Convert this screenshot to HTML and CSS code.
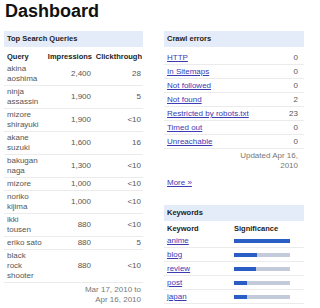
FILE: index.html
```html
<!DOCTYPE html>
<html lang="en">
<head>
    <meta charset="UTF-8">
    <title>Dashboard</title>
    <link rel="stylesheet" href="styles.css">
</head>
<body>
    <h1>Dashboard</h1>

    <div class="columns">
        <!-- Left column -->
        <div class="panel left">
            <div class="panel-title">Top Search Queries</div>
            <table class="queries">
                <thead>
                    <tr>
                        <th class="q">Query</th>
                        <th class="num imp">Impressions</th>
                        <th class="num">Clickthrough</th>
                    </tr>
                </thead>
                <tbody>
                    <tr><td>akina aoshima</td><td class="num">2,400</td><td class="num">28</td></tr>
                    <tr><td>ninja assassin</td><td class="num">1,900</td><td class="num">5</td></tr>
                    <tr><td>mizore shirayuki</td><td class="num">1,900</td><td class="num">&lt;10</td></tr>
                    <tr><td>akane suzuki</td><td class="num">1,600</td><td class="num">16</td></tr>
                    <tr><td>bakugan naga</td><td class="num">1,300</td><td class="num">&lt;10</td></tr>
                    <tr><td>mizore</td><td class="num">1,000</td><td class="num">&lt;10</td></tr>
                    <tr><td>noriko kijima</td><td class="num">1,000</td><td class="num">&lt;10</td></tr>
                    <tr><td>ikki tousen</td><td class="num">880</td><td class="num">&lt;10</td></tr>
                    <tr><td>eriko sato</td><td class="num">880</td><td class="num">5</td></tr>
                    <tr><td>black rock shooter</td><td class="num">880</td><td class="num">&lt;10</td></tr>
                </tbody>
            </table>
            <div class="stamp">Mar 17, 2010 to<br>Apr 16, 2010</div>
        </div>

        <!-- Right column -->
        <div class="side">
            <div class="panel">
                <div class="panel-title">Crawl errors</div>
                <table class="errors">
                    <tr><td><a href="#">HTTP</a></td><td class="num">0</td></tr>
                    <tr><td><a href="#">In Sitemaps</a></td><td class="num">0</td></tr>
                    <tr><td><a href="#">Not followed</a></td><td class="num">0</td></tr>
                    <tr><td><a href="#">Not found</a></td><td class="num">2</td></tr>
                    <tr><td><a href="#">Restricted by robots.txt</a></td><td class="num">23</td></tr>
                    <tr><td><a href="#">Timed out</a></td><td class="num">0</td></tr>
                    <tr><td><a href="#">Unreachable</a></td><td class="num">0</td></tr>
                </table>
                <div class="stamp">Updated Apr 16,<br>2010</div>
                <a href="#" class="more">More &raquo;</a>
            </div>

            <div class="panel">
                <div class="panel-title">Keywords</div>
                <table class="keywords">
                    <thead>
                        <tr><th>Keyword</th><th>Significance</th></tr>
                    </thead>
                    <tbody>
                        <tr><td><a href="#">anime</a></td><td><div class="bar"><div class="fill" style="width: 100%"></div></div></td></tr>
                        <tr><td><a href="#">blog</a></td><td><div class="bar"><div class="fill" style="width: 41%"></div></div></td></tr>
                        <tr><td><a href="#">review</a></td><td><div class="bar"><div class="fill" style="width: 39%"></div></div></td></tr>
                        <tr><td><a href="#">post</a></td><td><div class="bar"><div class="fill" style="width: 24%"></div></div></td></tr>
                        <tr><td><a href="#">japan</a></td><td><div class="bar"><div class="fill" style="width: 23%"></div></div></td></tr>
                    </tbody>
                </table>
            </div>
        </div>
    </div>
</body>
</html>
```

FILE: styles.css
```css
* {
    margin: 0;
    padding: 0;
    box-sizing: border-box;
}

body {
    background: #fff;
    color: #555;
    font-family: "Liberation Sans", Arial, sans-serif;
    font-size: 8px;
    line-height: 10px;
    padding: 1px 4px 0 4px;
}

h1 {
    font-size: 18px;
    line-height: 20px;
    color: #111;
    padding-left: 1px;
    margin-bottom: 10px;
}

.columns {
    display: flex;
    gap: 21px;
}

.left {
    width: 139px;
}

.side {
    width: 140px;
    display: flex;
    flex-direction: column;
    gap: 17px;
}

/* Panel header bar */
.panel-title {
    background: #e5ecf9;
    color: #222;
    font-weight: bold;
    font-size: 7.5px;
    height: 16px;
    line-height: 16px;
    padding-left: 3px;
}

table {
    width: 100%;
    border-collapse: collapse;
}

th {
    color: #222;
    font-weight: bold;
    font-size: 7.5px;
    text-align: left;
    padding: 5px 3px 1px;
}

td {
    padding: 2px 3px 1px;
    border-bottom: 1px solid #ebebeb;
    vertical-align: middle;
}

.num {
    text-align: right;
}

/* Top queries */
.queries {
    table-layout: fixed;
}

.queries .q {
    width: 41px;
}

.queries .imp {
    width: 48px;
}

.queries th.num {
    padding: 5px 1px 1px 0;
}

.queries td {
    padding: 1px 3px 1px;
}

.queries td.num {
    padding-right: 2px;
}

.stamp {
    text-align: right;
    color: #777;
    padding: 2px 2px 0 0;
}

a {
    color: #3b3bb3;
}

/* Crawl errors */
.errors {
    margin-top: 4px;
}

.errors td.num {
    padding-right: 6px;
}

.errors + .stamp {
    padding-right: 6px;
}

.more {
    display: block;
    padding: 7px 0 0 3px;
}

/* Keywords */
.keywords th {
    padding: 3px 3px 0;
}

.keywords td:first-child {
    width: 67px;
}

.bar {
    width: 56px;
    height: 4px;
    background: #c3cad9;
}

.fill {
    height: 100%;
    background: #2b5ec4;
}
```
